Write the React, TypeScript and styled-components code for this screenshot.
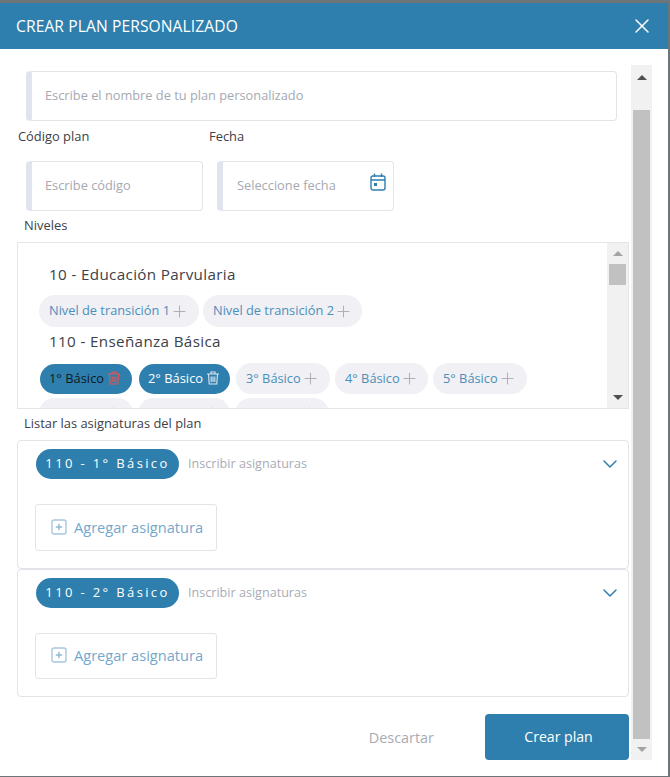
import React from "react";
import styled, { createGlobalStyle } from "styled-components";
import { X, Plus, ChevronDown } from "lucide-react";

const Global = createGlobalStyle`
  html, body { margin: 0; padding: 0; background: #6d7579; }
  * { box-sizing: border-box; }
  body { font-family: "Open Sans", "Noto Sans", sans-serif; }
`;

const Page = styled.div`
  width: 670px;
  height: 777px;
  padding: 3px 2px 1px 0;
  background: #6d7579;
  overflow: hidden;
`;
const Modal = styled.div`
  width: 668px;
  height: 773px;
  background: #fff;
  display: flex;
  flex-direction: column;
`;
const Header = styled.header`
  height: 46px;
  flex: none;
  background: #2e7fae;
  color: #fff;
  display: flex;
  align-items: center;
  justify-content: space-between;
  padding: 0 14px 0 16px;
  font-size: 15.6px;
  letter-spacing: 0.1px;
`;
const CloseButton = styled.span`
  display: flex;
  color: #fff;
`;
const Body = styled.div`
  flex: 1;
  display: flex;
  padding: 16px 16px 16px 17px;
  gap: 2px;
`;
const Content = styled.div`
  width: 612px;
  display: flex;
  flex-direction: column;
`;
const Field = styled.div<{ $w: number; $pad?: number }>`
  width: ${(p) => p.$w}px;
  height: 50px;
  border: 1px solid #e3e4ea;
  border-left: 6px solid #e1e4ed;
  border-radius: 4px;
  display: flex;
  align-items: center;
  justify-content: space-between;
  color: #a6a9b2;
  font-size: 12.8px;
  line-height: 16px;
  padding: 0 6px 2px ${(p) => p.$pad ?? 13}px;
`;
const NameField = styled(Field)`
  margin: 6px 0 0 9px;
`;
const Labels = styled.div`
  display: flex;
  height: 40px;
  padding-top: 7px;
  color: #3c4047;
  font-size: 12.9px;
  line-height: 17px;
`;
const LabelCol = styled.span`
  width: 191px;
  padding-left: 1px;
`;
const DateRow = styled.div`
  display: flex;
  gap: 14px;
  padding-left: 9px;
`;
const CalendarSlot = styled.span`
  display: flex;
  margin-top: -6px;
  margin-right: 1px;
`;
const SectionLabel = styled.div`
  padding-left: 7px;
  color: #3c4047;
  font-size: 12.9px;
  line-height: 17px;
`;
const NivelesLabel = styled(SectionLabel)`
  margin: 6px 0 8px;
`;
const ListarLabel = styled(SectionLabel)`
  margin: 6px 0 8px;
`;
const LevelsPanel = styled.div`
  height: 167px;
  border: 1px solid #e4e5e8;
  display: flex;
  overflow: hidden;
`;
const LevelsList = styled.div`
  flex: 1;
  padding: 20px 0 0 21px;
  height: 165px;
  overflow: hidden;
`;
const Heading = styled.div<{ $top?: number }>`
  margin: ${(p) => p.$top ?? 0}px 0 0 10px;
  font-size: 15.2px;
  line-height: 22px;
  color: #3d4148;
  letter-spacing: 0.36px;
`;
const ChipRow = styled.div<{ $top: number; $gap: number }>`
  display: flex;
  flex-wrap: wrap;
  align-items: center;
  gap: 4px ${(p) => p.$gap}px;
  margin-top: ${(p) => p.$top}px;
  width: 560px;
`;
const Chip = styled.span<{ $w: number; $h: number }>`
  width: ${(p) => p.$w}px;
  height: ${(p) => p.$h}px;
  border-radius: 16px;
  background: #f0f0f5;
  color: #4b8fb9;
  font-size: 12.8px;
  display: flex;
  align-items: center;
  padding: 0 0 2px 10px;
  white-space: nowrap;
`;
const PlusMark = styled.span`
  display: flex;
  margin-top: 2px;
`;
const ActiveChip = styled.span<{ $w: number; $dark?: boolean }>`
  width: ${(p) => p.$w}px;
  height: 30px;
  margin: 0 1px;
  border-radius: 15px;
  background: #2e7fae;
  color: ${(p) => (p.$dark ? "#0e1a22" : "#fff")};
  font-size: 12.9px;
  display: flex;
  align-items: center;
  gap: 3px;
  padding: 0 0 2px 9px;
  white-space: nowrap;
`;
const Scrollbar = styled.div<{ $w: number }>`
  width: ${(p) => p.$w}px;
  flex: none;
  background: #f1f1f1;
  display: flex;
  flex-direction: column;
  align-items: center;
`;
const ArrowBox = styled.span<{ $h: number; $inset?: number }>`
  height: ${(p) => p.$h}px;
  flex: none;
  display: flex;
  align-items: center;
  justify-content: center;
  padding-bottom: ${(p) => p.$inset ?? 0}px;
`;
const Thumb = styled.div<{ $w: number; $h?: number }>`
  width: ${(p) => p.$w}px;
  height: ${(p) => (p.$h ? `${p.$h}px` : "auto")};
  flex: ${(p) => (p.$h ? "none" : "1")};
  background: #c1c1c1;
`;
const Spacer = styled.div`
  flex: 1;
`;
const Card = styled.section<{ $h: number }>`
  height: ${(p) => p.$h}px;
  border: 1px solid #e3e4e9;
  border-radius: 4px;
  padding: 8px 6px 0 17px;
`;
const CardTop = styled.div`
  display: flex;
  align-items: center;
  gap: 9px;
`;
const Badge = styled.span`
  width: 143px;
  height: 30px;
  margin-left: 1px;
  border-radius: 15px;
  background: #2e7fae;
  color: #fff;
  font-size: 13px;
  letter-spacing: 2.37px;
  padding-bottom: 2px;
  display: flex;
  align-items: center;
  justify-content: center;
  white-space: nowrap;
`;
const Hint = styled.span`
  flex: 1;
  font-size: 12.6px;
  color: #a9acb4;
  padding-bottom: 2px;
`;
const Chevron = styled.span`
  display: flex;
  color: #2e7fae;
`;
const AddButton = styled.div<{ $h: number }>`
  width: 182px;
  height: ${(p) => p.$h}px;
  margin-top: 25px;
  border: 1px solid #e3e4ea;
  border-radius: 3px;
  display: flex;
  align-items: center;
  gap: 7px;
  padding-left: 15px;
  color: #74a7cb;
  font-size: 14.6px;
  line-height: 18px;
  padding-bottom: 2px;
`;
const Footer = styled.footer`
  display: flex;
  justify-content: flex-end;
  align-items: center;
  margin-top: 17px;
`;
const Discard = styled.span`
  color: #a8abb3;
  font-size: 14.4px;
  margin-right: 51px;
`;
const Primary = styled.span`
  width: 144px;
  height: 46px;
  border-radius: 4px;
  background: #2e7fae;
  color: #fff;
  font-size: 14.1px;
  display: flex;
  align-items: center;
  justify-content: center;
  padding: 0 0 2px 3px;
`;

const Up = ({ c }: { c: string }) => (
  <svg width="10" height="5" viewBox="0 0 10 5"><path d="M5 0 L10 5 H0 Z" fill={c} /></svg>
);
const Down = ({ c }: { c: string }) => (
  <svg width="10" height="5" viewBox="0 0 10 5"><path d="M0 0 H10 L5 5 Z" fill={c} /></svg>
);
const Calendar = () => (
  <svg width="16" height="18" viewBox="0 0 16 18" fill="none" stroke="#2e7fae" strokeWidth="1.4">
    <rect x="1" y="3" width="14" height="14" rx="2" />
    <path d="M1 7 H15 M4.5 0.5 V4 M11.5 0.5 V4" />
    <rect x="4" y="10" width="3" height="3" fill="#2e7fae" stroke="none" />
  </svg>
);
const AddIcon = () => (
  <svg width="16" height="16" viewBox="0 0 16 16" fill="none" stroke="#a6c8dd" strokeWidth="1.4">
    <rect x="1" y="1" width="14" height="14" rx="2" />
    <path d="M8 4.8 V11.2 M4.8 8 H11.2" stroke="#8fb9d4" />
  </svg>
);
const TrashIcon = ({ c }: { c: string }) => (
  <svg width="14" height="14" viewBox="0 0 14 14" fill="none" stroke={c} strokeWidth="1.1">
    <path d="M1 3 H13 M5 3 V1 H9 V3 M2.5 3 L3.2 13 H10.8 L11.5 3 M5.2 5.5 V11 M7 5.5 V11 M8.8 5.5 V11" />
  </svg>
);

const rowB = [
  ["3° Básico", 94],
  ["4° Básico", 93],
  ["5° Básico", 94],
  ["6° Básico", 94],
  ["7° Básico", 92],
  ["8° Básico", 94],
] as const;

const Plain = ({ t, w, h }: { t: string; w: number; h: number }) => (
  <Chip $w={w} $h={h}>
    {t}
    <PlusMark>
      <Plus size={19} color="#aeb0b5" strokeWidth={1.3} />
    </PlusMark>
  </Chip>
);

const SubjectCard = ({ title, h, bh }: { title: string; h: number; bh: number }) => (
  <Card $h={h}>
    <CardTop>
      <Badge>{title}</Badge>
      <Hint>Inscribir asignaturas</Hint>
      <Chevron>
        <ChevronDown size={24} strokeWidth={1.5} />
      </Chevron>
    </CardTop>
    <AddButton $h={bh}>
      <AddIcon />
      Agregar asignatura
    </AddButton>
  </Card>
);

export default function App() {
  return (
    <Page>
      <Global />
      <Modal>
        <Header>
          CREAR PLAN PERSONALIZADO
          <CloseButton>
            <X size={24} strokeWidth={1.5} />
          </CloseButton>
        </Header>
        <Body>
          <Content>
            <NameField $w={591}>Escribe el nombre de tu plan personalizado</NameField>
            <Labels>
              <LabelCol>Código plan</LabelCol>
              <LabelCol>Fecha</LabelCol>
            </Labels>
            <DateRow>
              <Field $w={177}>Escribe código</Field>
              <Field $w={177} $pad={14}>
                Seleccione fecha
                <CalendarSlot>
                  <Calendar />
                </CalendarSlot>
              </Field>
            </DateRow>
            <NivelesLabel>Niveles</NivelesLabel>
            <LevelsPanel>
              <LevelsList>
                <Heading>10 - Educación Parvularia</Heading>
                <ChipRow $top={10} $gap={4}>
                  <Plain t="Nivel de transición 1" w={160} h={32} />
                  <Plain t="Nivel de transición 2" w={159} h={32} />
                </ChipRow>
                <Heading $top={3}>110 - Enseñanza Básica</Heading>
                <ChipRow $top={11} $gap={5}>
                  <ActiveChip $w={92} $dark>
                    1° Básico
                    <TrashIcon c="#e8544f" />
                  </ActiveChip>
                  <ActiveChip $w={91}>
                    2° Básico
                    <TrashIcon c="#dbe8f1" />
                  </ActiveChip>
                  {rowB.map(([t, w]) => (
                    <Plain key={t} t={t} w={w} h={31} />
                  ))}
                </ChipRow>
              </LevelsList>
              <Scrollbar $w={21}>
                <ArrowBox $h={21}>
                  <Up c="#a3a3a3" />
                </ArrowBox>
                <Thumb $w={17} $h={21} />
                <Spacer />
                <ArrowBox $h={21}>
                  <Down c="#505050" />
                </ArrowBox>
              </Scrollbar>
            </LevelsPanel>
            <ListarLabel>Listar las asignaturas del plan</ListarLabel>
            <SubjectCard title="110 - 1° Básico" h={129} bh={47} />
            <SubjectCard title="110 - 2° Básico" h={128} bh={46} />
            <Footer>
              <Discard>Descartar</Discard>
              <Primary>Crear plan</Primary>
            </Footer>
          </Content>
          <Scrollbar $w={21}>
            <ArrowBox $h={45} $inset={21}>
              <Up c="#505050" />
            </ArrowBox>
            <Thumb $w={17} />
            <ArrowBox $h={21}>
              <Down c="#a3a3a3" />
            </ArrowBox>
          </Scrollbar>
        </Body>
      </Modal>
    </Page>
  );
}
